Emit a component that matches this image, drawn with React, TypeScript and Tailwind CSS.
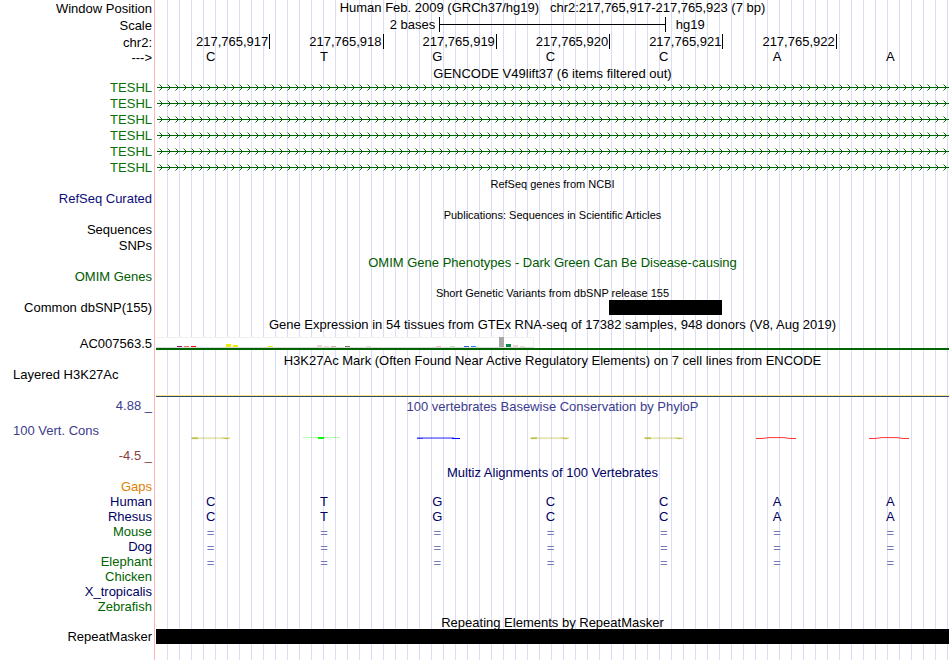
import type { ReactNode } from "react";

type RowProps = {
  label?: string;
  labelClass?: string;
  height?: string;
  children?: ReactNode;
};

type GtexBar = { slot: number; height: number; color: string };

const bases = ["C", "T", "G", "C", "C", "A", "A"];
const positions = [
  "217,765,917",
  "217,765,918",
  "217,765,919",
  "217,765,920",
  "217,765,921",
  "217,765,922",
];
const transcripts = [1, 2, 3, 4, 5, 6];

// slot = tissue order, 7px each
const gtexBars: GtexBar[] = [
  { slot: 3, height: 1, color: "#8b1c62" },
  { slot: 4, height: 1, color: "#ee6a50" },
  { slot: 5, height: 1, color: "#ff0000" },
  { slot: 10, height: 3, color: "#eeee00" },
  { slot: 11, height: 2, color: "#eeee00" },
  { slot: 16, height: 1, color: "#eeee00" },
  { slot: 23, height: 2, color: "#eed5d2" },
  { slot: 24, height: 1, color: "#eed5d2" },
  { slot: 25, height: 1, color: "#cdb79e" },
  { slot: 27, height: 1, color: "#8b7355" },
  { slot: 30, height: 1, color: "#eed5d2" },
  { slot: 40, height: 1, color: "#ffb6c1" },
  { slot: 42, height: 1, color: "#b4eeb4" },
  { slot: 44, height: 1, color: "#3a5fcd" },
  { slot: 45, height: 1, color: "#1e90ff" },
  { slot: 49, height: 10, color: "#a6a6a6" },
  { slot: 50, height: 3, color: "#008b45" },
  { slot: 51, height: 2, color: "#eed5d2" },
  { slot: 52, height: 1, color: "#eed5d2" },
];

const alignments = [
  { name: "Gaps", color: "text-[#e08000]", kind: "none" },
  { name: "Human", color: "text-[#000064]", kind: "bases" },
  { name: "Rhesus", color: "text-[#000064]", kind: "bases" },
  { name: "Mouse", color: "text-[#006400]", kind: "gap" },
  { name: "Dog", color: "text-[#000064]", kind: "gap" },
  { name: "Elephant", color: "text-[#006400]", kind: "gap" },
  { name: "Chicken", color: "text-[#006400]", kind: "none" },
  { name: "X_tropicalis", color: "text-[#000064]", kind: "none" },
  { name: "Zebrafish", color: "text-[#006400]", kind: "none" },
];

const Row = (props: RowProps) => {
  const { label, labelClass = "text-right", height = "h-4", children } = props;

  return (
    <div className={`flex gap-px ${height}`}>
      <div
        className={`w-[155px] shrink-0 border-r border-[#ffb4b4] pr-0.5 whitespace-pre ${labelClass}`}
      >
        {label}
      </div>
      <div className="min-w-0 flex-1 bg-[repeating-linear-gradient(to_right,transparent_0_11px,#dcdcf8_11px_12px)]">
        {children}
      </div>
    </div>
  );
};

const Title = (props: { children: string; className?: string }) => (
  <h2 className={`text-center whitespace-pre ${props.className ?? "pt-px"}`}>
    {props.children}
  </h2>
);

const BaseLetters = (props: { letters: string[]; className?: string }) => (
  <div className={`grid grid-cols-7 text-center ${props.className ?? ""}`}>
    {props.letters.map((letter, i) => (
      <span key={i} className="pr-1">
        {letter}
      </span>
    ))}
  </div>
);

const Transcript = () => (
  <svg className="block h-4 w-full" shapeRendering="crispEdges">
    <rect x="1" y="7" width="100%" height="1" fill="#006400" />
    <rect x="1" y="4" width="100%" height="7" fill="url(#strand)" />
  </svg>
);

// PhyloP score drawn as a flattened base letter
const PhyloLetter = ({ base }: { base: string }) => (
  <svg className="mx-auto block" width="46" height="3" viewBox="0 0 46 3">
    {base === "C" && (
      <>
        <rect x="1" y="0.3" width="39" height="1.8" fill="#b4b428" opacity="0.35" />
        <rect x="2" y="0.3" width="6" height="1.8" fill="#b4b428" opacity="0.7" />
        <path d="M31 0.4 L40 1.3 L36 2.2 Z" fill="#b4b428" opacity="0.8" />
      </>
    )}
    {base === "T" && (
      <>
        <rect x="0" y="0" width="37" height="1" fill="#00ff00" opacity="0.3" />
        <rect x="15" y="0" width="6" height="2" fill="#00ff00" />
      </>
    )}
    {base === "G" && (
      <>
        <rect x="1" y="0.2" width="37" height="1" fill="#0000ff" opacity="0.5" />
        <rect x="1" y="1" width="6" height="1" fill="#0000ff" opacity="0.7" />
        <rect x="7" y="1" width="32" height="1" fill="#0000ff" opacity="0.4" />
        <rect x="36" y="1" width="8" height="1" fill="#0000ff" />
      </>
    )}
    {base === "A" && (
      <path
        d="M0 1.5 H6 L13 0.6 H28 L34 1.5 H40"
        fill="none"
        stroke="#ff0000"
        strokeWidth="0.8"
      />
    )}
  </svg>
);

export default function App() {
  return (
    <main className="flex min-h-screen flex-col overflow-hidden bg-white pr-px font-['Liberation_Sans',Arial,sans-serif] text-[13px] leading-4 text-black">
      {/* strand arrows, shared by all transcripts */}
      <svg className="absolute h-0 w-0" aria-hidden="true">
        <defs>
          <pattern id="strand" x="3" y="4" width="8" height="7" patternUnits="userSpaceOnUse">
            <path d="M1 1h1v1h-1z M2 2h1v1h-1z M3 3h1v1h-1z M2 4h1v1h-1z M1 5h1v1h-1z" fill="#006400" />
            <path d="M0 0h1v1h-1z M0 6h1v1h-1z" fill="#7fb17f" />
          </pattern>
        </defs>
      </svg>

      {/* ruler */}
      <Row label="Window Position" labelClass="text-right pt-px">
        <Title className="pt-0">{"Human Feb. 2009 (GRCh37/hg19)   chr2:217,765,917-217,765,923 (7 bp)"}</Title>
      </Row>
      <Row label="Scale" height="h-[17px]" labelClass="text-right pt-0.5">
        <div className="grid grid-cols-14">
          <span className="col-span-5 pt-px pr-1 text-right">2 bases</span>
          <span className="col-span-4 mt-px flex h-[15px] items-center border-x border-black">
            <span className="h-px w-full bg-black" />
          </span>
          <span className="col-span-5 pt-px pl-2.5">hg19</span>
        </div>
      </Row>
      <Row label="chr2:" height="h-[17px]" labelClass="text-right pt-0.5">
        <div className="grid grid-cols-7 pt-px text-right">
          {positions.map((position, i) => (
            <span
              key={position}
              className={`h-[15px] pr-px ${i > 0 ? "border-l border-black" : ""}`}
            >
              {position}
            </span>
          ))}
          <span className="h-[15px] border-l border-black" />
        </div>
      </Row>
      <Row label="--->" height="h-[15px]">
        <BaseLetters letters={bases} className="leading-[14px]" />
      </Row>

      {/* genes */}
      <Row height="h-[15px]">
        <Title>GENCODE V49lift37 (6 items filtered out)</Title>
      </Row>
      {transcripts.map((n) => (
        <Row key={n} label="TESHL" labelClass="text-right text-[#087008]">
          <Transcript />
        </Row>
      ))}
      <Row height="h-[15px]">
        <Title className="text-[11px]">RefSeq genes from NCBI</Title>
      </Row>
      <Row label="RefSeq Curated" labelClass="text-right text-[#0c0c78]" />
      <Row height="h-[15px]">
        <Title className="text-[11px]">Publications: Sequences in Scientific Articles</Title>
      </Row>
      <Row label="Sequences" />
      <Row label="SNPs" />
      <Row height="h-[15px]">
        <Title className="pt-px text-[#005a00]">
          OMIM Gene Phenotypes - Dark Green Can Be Disease-causing
        </Title>
      </Row>
      <Row label="OMIM Genes" labelClass="text-right text-[#005a00]" />

      {/* variants */}
      <Row height="h-[15px]">
        <Title className="text-[11px]">Short Genetic Variants from dbSNP release 155</Title>
      </Row>
      <Row label="Common dbSNP(155)">
        <div className="grid grid-cols-7">
          <span className="col-start-5 h-[15px] bg-black" />
        </div>
      </Row>

      {/* expression */}
      <Row height="h-5">
        <Title>
          Gene Expression in 54 tissues from GTEx RNA-seq of 17382 samples, 948 donors (V8, Aug 2019)
        </Title>
      </Row>
      <Row label="AC007563.5">
        <svg className="block h-3 w-[378px]" shapeRendering="crispEdges">
          <rect x="0" y="1" width="378" height="11" fill="#f0f0f0" />
          <rect x="0" y="2" width="377" height="9" fill="#ffffff" />
          <rect x="0" y="11" width="378" height="1" fill="#d8d8d8" />
          {gtexBars.map((bar) => (
            <rect
              key={bar.slot}
              x={bar.slot * 7}
              y={11 - bar.height}
              width="5"
              height={bar.height}
              fill={bar.color}
            />
          ))}
        </svg>
        <div className="h-0.5 bg-[#006400]" />
      </Row>

      {/* regulation */}
      <Row height="h-[15px]">
        <Title>H3K27Ac Mark (Often Found Near Active Regulatory Elements) on 7 cell lines from ENCODE</Title>
      </Row>
      <Row label="Layered H3K27Ac" height="h-[31px]" labelClass="text-left pl-[13px]">
        <div className="flex h-[30px] flex-col justify-end">
          <div className="h-px bg-[#ffdc8c]" />
          <div className="h-px bg-[#285064]" />
        </div>
      </Row>

      {/* conservation */}
      <Row label="4.88 _" labelClass="text-right text-[#3c3c8c]">
        <Title className="pt-px text-[#3c3c8c]">100 vertebrates Basewise Conservation by PhyloP</Title>
      </Row>
      <Row label="100 Vert. Cons" height="h-[34px]" labelClass="text-left pt-[9px] pl-[13px] text-[#3c3c8c]">
        <div className="grid grid-cols-7 pt-[23px]">
          {bases.map((base, i) => (
            <PhyloLetter key={i} base={base} />
          ))}
        </div>
      </Row>
      <Row label="-4.5 _" labelClass="text-right text-[#8c3c3c]" />

      {/* alignments */}
      <Row height="h-[15px]">
        <Title className="pt-px text-[#000064]">Multiz Alignments of 100 Vertebrates</Title>
      </Row>
      {alignments.map((species) => (
        <Row key={species.name} label={species.name} height="h-[15px]" labelClass={`text-right ${species.color}`}>
          {species.kind === "bases" && <BaseLetters letters={bases} className="text-[#000064]" />}
          {species.kind === "gap" && (
            <BaseLetters letters={bases.map(() => "=")} className="pt-px text-[#7878b4]" />
          )}
        </Row>
      ))}

      {/* repeats */}
      <Row height="h-[15px]">
        <Title>Repeating Elements by RepeatMasker</Title>
      </Row>
      <Row label="RepeatMasker" height="h-[15px]">
        <div className="h-full bg-black" />
      </Row>
      <Row height="flex-1" />
    </main>
  );
}
